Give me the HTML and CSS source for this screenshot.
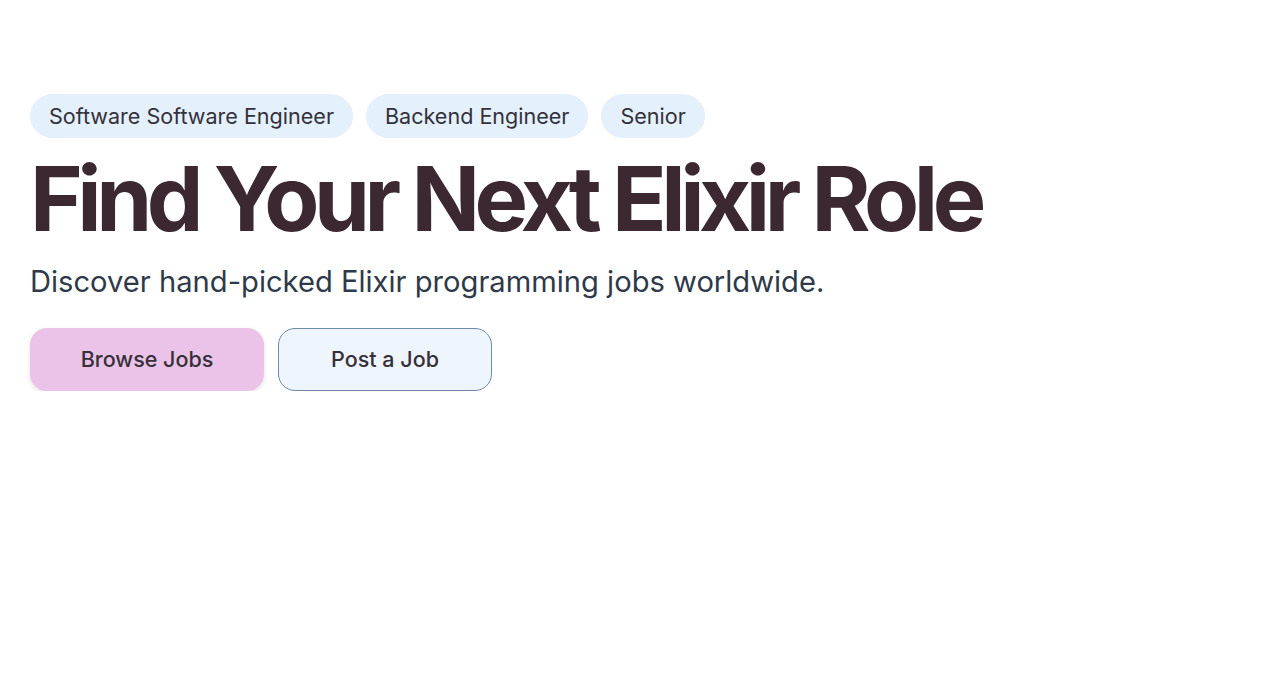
FILE: index.html
```html
<!DOCTYPE html>
<html lang="en">
<head>
<meta charset="utf-8">
<title>Elixir Jobs</title>
<link rel="stylesheet" href="styles.css">
</head>
<body>
<main class="hero">
  <div class="tags">
    <span class="tag">Software Software Engineer</span>
    <span class="tag">Backend Engineer</span>
    <span class="tag">Senior</span>
  </div>
  <h1 class="title">Find Your Next Elixir Role</h1>
  <p class="subtitle">Discover hand-picked Elixir programming jobs worldwide.</p>
  <div class="actions">
    <a class="btn btn-primary" href="#">Browse Jobs</a>
    <a class="btn btn-secondary" href="#">Post a Job</a>
  </div>
</main>
</body>
</html>
```

FILE: styles.css
```css
* { box-sizing: border-box; }
html, body {
  margin: 0;
  background: #ffffff;
  font-family: Inter, "Noto Sans", sans-serif;
}
.hero {
  padding: 94px 30px 0 30px;
  display: flex;
  flex-direction: column;
  align-items: flex-start;
}
.tags {
  display: flex;
  gap: 13px;
}
.tag {
  display: inline-flex;
  align-items: center;
  height: 44px;
  padding: 0 19px;
  border-radius: 22px;
  background: #e5f0fd;
  color: #33313a;
  font-size: 21.55px;
}
.title {
  margin: 16px 0 0 0;
  font-size: 90px;
  line-height: 1;
  font-weight: 700;
  letter-spacing: -5.5px;
  color: #3c2830;
}
.subtitle {
  margin: 20px 0 0 0;
  font-size: 29.15px;
  line-height: 1.2;
  color: #2e3a4a;
}
.actions {
  display: flex;
  gap: 14px;
  margin-top: 29px;
}
.btn {
  display: inline-flex;
  align-items: center;
  justify-content: center;
  width: 234px;
  height: 63px;
  border-radius: 17px;
  font-size: 21.5px;
  font-weight: 500;
  text-decoration: none;
  color: #36303a;
}
.btn-primary {
  background: #ecc3e8;
  box-shadow: 0 2px 5px rgba(0, 0, 0, 0.12);
}
.btn-secondary {
  width: 214px;
  background: #eff5fd;
  border: 1.5px solid #6d8aa6;
}
```
